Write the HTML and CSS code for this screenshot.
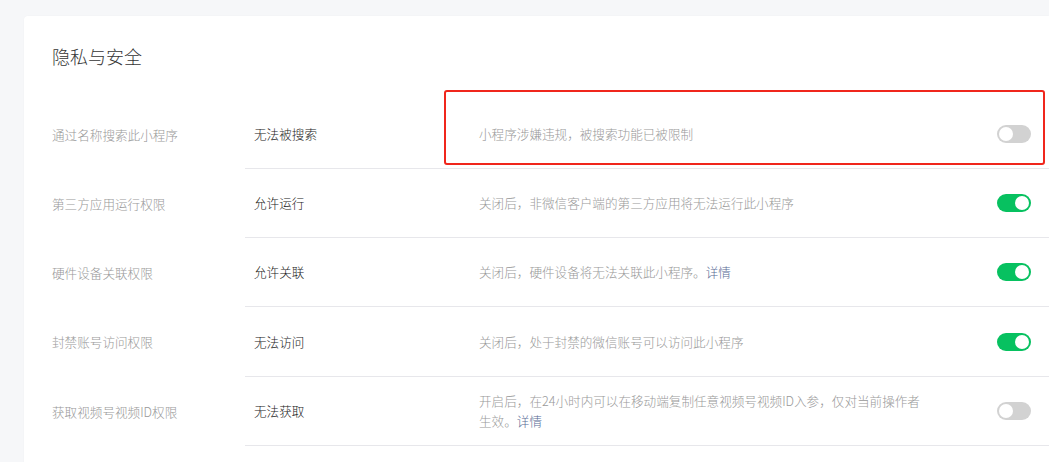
FILE: index.html
```html
<!DOCTYPE html>
<html lang="zh-CN">
<head>
<meta charset="utf-8">
<link rel="stylesheet" href="styles.css">
</head>
<body>
<div class="card">
  <h2 class="title">隐私与安全</h2>
  <div class="rows">
    <div class="row">
      <div class="label">通过名称搜索此小程序</div>
      <div class="main">
        <div class="value">无法被搜索</div>
        <div class="desc">小程序涉嫌违规，被搜索功能已被限制</div>
        <span class="switch"></span>
      </div>
      <div class="highlight"></div>
    </div>
    <div class="row">
      <div class="label">第三方应用运行权限</div>
      <div class="main">
        <div class="value">允许运行</div>
        <div class="desc">关闭后，非微信客户端的第三方应用将无法运行此小程序</div>
        <span class="switch on"></span>
      </div>
    </div>
    <div class="row">
      <div class="label">硬件设备关联权限</div>
      <div class="main">
        <div class="value">允许关联</div>
        <div class="desc">关闭后，硬件设备将无法关联此小程序。<a class="link">详情</a></div>
        <span class="switch on"></span>
      </div>
    </div>
    <div class="row">
      <div class="label">封禁账号访问权限</div>
      <div class="main">
        <div class="value">无法访问</div>
        <div class="desc">关闭后，处于封禁的微信账号可以访问此小程序</div>
        <span class="switch on"></span>
      </div>
    </div>
    <div class="row">
      <div class="label">获取视频号视频ID权限</div>
      <div class="main">
        <div class="value">无法获取</div>
        <div class="desc">开启后，在24小时内可以在移动端复制任意视频号视频ID入参，仅对当前操作者生效。<a class="link">详情</a></div>
        <span class="switch"></span>
      </div>
    </div>
  </div>
</div>
</body>
</html>
```
FILE: styles.css
```css
html, body {
  margin: 0;
  padding: 0;
  background: #f6f7f9;
  font-family: "Noto Sans CJK SC", "Noto Sans", sans-serif;
  overflow: hidden;
}
.card {
  margin: 16px 0 0 24px;
  background: #fff;
  border-radius: 4px 0 0 0;
  padding: 28px 0 0 28px;
  min-height: 600px;
  box-shadow: 0 0 2px rgba(0,0,0,0.03);
}
.title {
  margin: 0;
  font-size: 18px;
  font-weight: 300;
  line-height: 24px;
  color: #353535;
}
.rows {
  margin-top: 32px;
}
.row {
  position: relative;
  display: flex;
  font-size: 12.6px;
  line-height: 20px;
  font-weight: 300;
}
.label {
  width: 193px;
  flex: none;
  color: #999;
  display: flex;
  align-items: center;
}
.main {
  flex: 1;
  display: flex;
  align-items: center;
  min-height: 68px;
  border-bottom: 1px solid #e7e7eb;
  padding-right: 18px;
}
.row:nth-child(4) .main {
  min-height: 69px;
}
.value {
  width: 225px;
  flex: none;
  padding-left: 9px;
  color: #222;
}
.desc {
  width: 450px;
  color: #999;
}
.link {
  color: #576b95;
  cursor: pointer;
}
.switch {
  margin-left: auto;
  width: 34px;
  height: 18px;
  border-radius: 9px;
  background: #d2d2d2;
  position: relative;
  flex: none;
}
.switch::after {
  content: "";
  position: absolute;
  top: 2px;
  left: 2px;
  width: 14px;
  height: 14px;
  border-radius: 50%;
  background: #fff;
}
.switch.on {
  background: #07c160;
}
.switch.on::after {
  left: 18px;
}
.highlight {
  position: absolute;
  left: 392px;
  top: -10px;
  width: 597px;
  height: 71px;
  border: 2px solid #f0261c;
  border-radius: 3px;
  pointer-events: none;
}
```
